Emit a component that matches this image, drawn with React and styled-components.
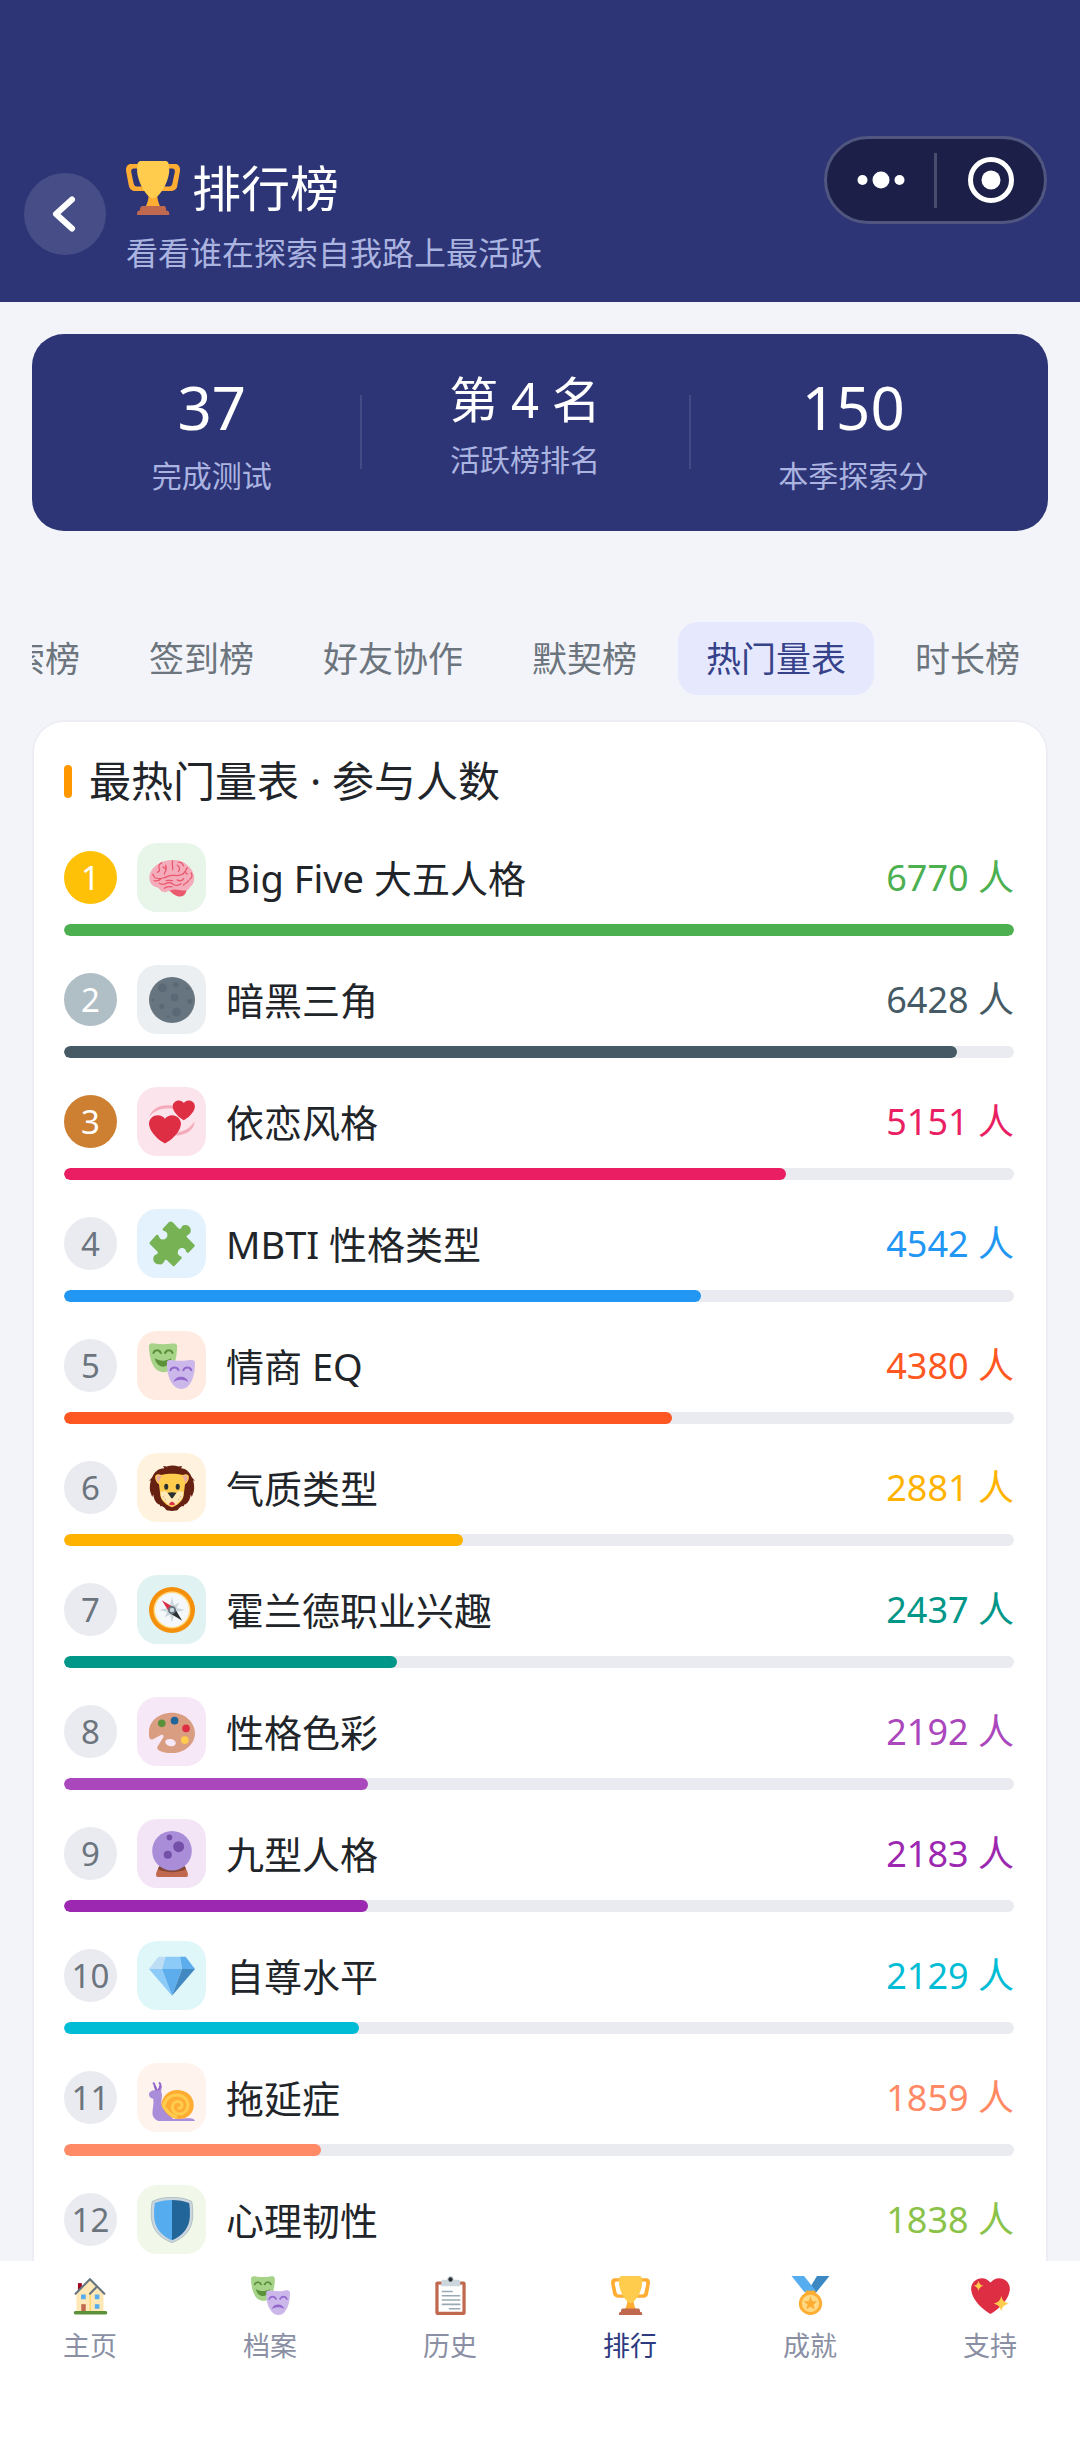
import React, { useState } from "react"
import styled, { createGlobalStyle } from "styled-components"

const GlobalStyle = createGlobalStyle`
  * {
    box-sizing: border-box;
  }

  body {
    margin: 0;
    background: #f3f4f9;
    color: #212529;
    font-family: "Noto Sans", "Noto Sans CJK SC", sans-serif;
  }

  button {
    border: 0;
    padding: 0;
    font-family: inherit;
    cursor: pointer;
  }

  h1, h2, p, ol {
    margin: 0;
    padding: 0;
    font-weight: 400;
  }
`

const heartPath =
  "M35.885 11.833c0-5.45-4.418-9.868-9.867-9.868-3.308 0-6.227 1.633-8.018 4.129-1.791-2.496-4.71-4.129-8.017-4.129-5.45 0-9.868 4.417-9.868 9.868 0 .772.098 1.52.266 2.241C1.751 22.587 11.216 31.568 18 35c6.783-3.432 16.249-12.413 17.617-20.925.17-.721.268-1.469.268-2.242z"

const emojis = {
  trophy: (
    <>
      <path
        fill="#FFAC33"
        d="M5.123 5h6C12.227 5 13 4.896 13 6V4c0-1.104-.773-2-1.877-2h-8c-2 0-3.583 2.125-3 5 0 0 1.791 9.375 1.917 9.958C2.373 18.5 4.164 20 6.081 20h6.958c1.105 0-.039-1.896-.039-3v-2c0 1.104-.773 2-1.877 2h-4c-1.104 0-1.833-1.042-2-2S3.539 7.667 3.539 7.667C3.206 5.75 4.018 5 5.123 5zm25.812 0h-6C23.831 5 22 4.896 22 6V4c0-1.104 1.831-2 2.935-2h8c2 0 3.584 2.125 3 5 0 0-1.633 9.419-1.771 10-.354 1.5-2.042 3-4 3h-7.146C21.914 20 22 18.104 22 17v-2c0 1.104 1.831 2 2.935 2h4c1.104 0 1.834-1.042 2-2s1.584-7.333 1.584-7.333C32.851 5.75 32.04 5 30.935 5zM20.832 22c0-6.958-2.709 0-2.709 0s-3-6.958-3 0-3.291 10-3.291 10h12.292s-3.292-3.042-3.292-10z"
      />
      <path
        fill="#FFCC4D"
        d="M28.8 6.577c0 6.775-6.4 18.423-10.7 18.423S7.4 13.352 7.4 6.577C7.4 1.054 8.1 0 10.1 0h16c2 0 2.7 1.054 2.7 6.577z"
      />
      <path
        fill="#C1694F"
        d="M26.8 33c0-1.4-.2-3-1.6-3H11c-1.4 0-1.8 1.6-1.8 3-1 0-1.8.7-1.8 1.6V36h21.4v-1.4c0-.9-.9-1.6-2-1.6z"
      />
    </>
  ),
  brain: (
    <>
      <path fill="#EA596E" d="M15 27c3-1.5 9-1.5 14.5 0-.3 2.600-2 5.500-5 5.500-4 0-6-2.500-9.500-5.500z" />
      <path
        fill="#F4ABBA"
        d="M35.300 17.500c-.1-3.500-1.800-6.500-4.500-8.700C28 5.500 23.500 4 18 4c-3.500 0-6.500.8-8.800 2.200C5 7.500.5 12 .3 17.500c-.1 4 2 6.800 4.700 7.500 1.500.4 2.600.5 3.500 2 1.300 2 3.500 2.400 5.500 1.800 2.500-.6 4-1.800 6-1.800 3 0 5 1 8.500.8 2-.1 2.700-1.300 3.800-3 2-1 3.200-4 3-7.300z"
      />
      <path
        fill="none"
        stroke="#EA596E"
        strokeWidth="1"
        strokeLinecap="round"
        d="M3 15c1 4 4 4 8 3s4-2.500 9-2c4 .4 7-.5 8-3M4 20c2 .5 4 0 5-1M10 6c-2 1-2.500 3-2 4.500s0 2.500-1.500 3M13 8c1.500 2.500 0 4-1 7M18.500 4.500c-1 3 .5 4.500 0 7M22 8c2 1 2.500 3 1 5M23 5.500c2 0 3.500 1 4 3M30 10c-2 2-2 4 0 5M33 14c1 2 .5 4-1 5M31 20c-1 2-3 2-4 3.500M8 22c2 2 4 1 6 0s4 0 5 1 4 1 6-.5M12 26c2-2 4-1.500 6-1M11 9.500l2 1M22 19.500c2 1 4 1 5-1M13.500 20c2-.5 3 0 5 0"
      />
    </>
  ),
  moon: (
    <>
      <circle cx="18" cy="18" r="18" fill="#66757F" />
      <g fill="#5B6876">
        <circle cx="10.5" cy="8.500" r="3.500" />
        <circle cx="20" cy="16" r="3" />
        <circle cx="21.500" cy="27.500" r="3.500" />
        <circle cx="21" cy="6" r="2" />
        <circle cx="32" cy="19" r="2" />
        <circle cx="30" cy="9" r="1" />
        <circle cx="10" cy="23" r="2" />
        <circle cx="15" cy="31" r="1" />
        <circle cx="3" cy="18" r="1" />
      </g>
    </>
  ),
  hearts: (
    <>
      <path fill="#F4ABBA" d="M.3 14C2 7.500 9 3.500 19 5.200v2.500C11 6.800 4.500 8.500.3 14zM35.700 17.500C35.500 24 29 29.500 18 28.500l2-2.500c6 .3 12-2.500 15.700-8.500z" />
      <path fill="#DD2E44" transform="translate(-.1 11.400) scale(.7 .67)" d={heartPath} />
      <path fill="#DD2E44" transform="translate(18.500 .3) scale(.485 .465)" d={heartPath} />
    </>
  ),
  puzzle: (
    <path
      fill="#77B255"
      d="M15.500 1q1.500-1.300 3 0l4.700 4.800c.8.7 1.700.4 2.200-.7C26 3.500 27.500 3 29 3.200c2.300.3 4 2.300 3.700 4.600-.2 1.500-1 2.600-2.300 3.100-1.200.5-1.300 1.300-.5 2.100l5.500 5.300q.8.900 0 1.800L31.300 24.500c-.7.7-1.800.5-2.200-.6-.5-1.600-1.400-2.600-2.900-2.700-2.200-.1-3.800 1.600-3.700 3.700.1 1.300.8 2.200 2 2.700 1.300.4 1.400 1.400.6 2.200l-5 5.200q-.8.900-1.700 0l-4.300-4.200c-.8-.8-1.700-.5-2.100.7-.7 1.800-2 2.700-3.900 2.400-3-.1-4.900-1.900-4.700-4.600 0-1.600 1-2.800 2.500-3.300 1.200-.4 1.400-1.200.6-2.100L.8 18.200q-.8-.8 0-1.700l4.700-5.300c.7-.8 1.700-.6 2.200.7.5 1.500 1.500 2.600 3 2.600 2.400 0 3.900-1.700 3.700-3.900-.2-1.400-1-2.400-2.500-2.800-1.300-.4-1.600-1.300-.8-2.200z"
    />
  ),
  masks: (
    <>
      <path fill="#A6D388" d="M0 2C1-.2 3 .2 5.500.600c3.500.5 7.500.5 11 0C19 .2 21.500 0 22 2c0 8-1.500 16-6 19.600-3 2-7 1.700-10-.6C1.500 17 0 9 0 2z" />
      <path fill="none" stroke="#5C913B" strokeWidth="1.600" strokeLinecap="round" d="M3.500 7.800c1.200-2.800 4.500-2.800 5.800 0M12.600 7.800c1.300-2.800 4.600-2.800 5.800 0" />
      <path fill="#5C913B" d="M4.500 12c4 2.600 9 2.600 13 0-.8 4-3.500 6.500-6.500 6.500S5.300 16 4.500 12z" />
      <path fill="#CBB7EA" d="M14 15c.5-2 3-1.800 5.500-1.400 3.500.5 7.500.5 11-.1 2.500-.5 5-.5 5.500 1.500 0 8-1.500 14.500-5.500 18.900-3 2.700-7.500 2.700-10.500 0C15.500 29.500 14 23 14 15z" />
      <path fill="none" stroke="#9266CC" strokeWidth="1.600" strokeLinecap="round" d="M16.800 21.200c1.200-2.800 5-2.800 6.300 0M26.900 21.200c1.300-2.800 5-2.800 6.200 0" />
      <path fill="#9266CC" d="M19.300 30.500c1.500-5.500 9.900-5.500 11.400 0-3.500-2.300-7.900-2.300-11.400 0z" />
    </>
  ),
  lion: (
    <>
      <path
        fill="#662113"
        d="M11 .8l3 .4c3-1 6-1 9 0l3-.4-1 1.700c4 0 7 3.300 8.500 7l2.500 3-1.500-.5c.8 3 1.200 6 .5 9l-1.500 4-.8-2c-.7 4-2 7-5 8l-.7 1.500-1-.5c-2 1-3 2-3.700 3.500L18 36l-4.300-.5c-.7-1.500-1.700-2.500-3.700-3.500l-1 .5L8.300 31c-3-1-4.300-4-5-8l-.8 2L1 21c-.7-3-.3-6 .5-9l-1.500.5 2.500-3C4 5.800 7 2.500 12 2.500z"
      />
      <path fill="#FFCC4D" d="M4.800 9.500C5 7.300 7 6.800 9.500 7.800c5-1.400 12-1.400 17 0 2.500-1 4.500-.5 4.700 1.700.1 2.200-1.200 4.500-3 5.500l-1.200 9.500c-1 4-5 7.500-9 8.500-4-1-8-4.500-9-8.500L7.800 15c-1.800-1-3.100-3.300-3-5.500z" />
      <path fill="#E6AAAA" d="M6 9.500c.2-1.700 1.700-1.600 4-.7-1.500 1.500-2 3.700-2.200 5C6.700 13 5.900 11.200 6 9.500zM30 9.500c-.2-1.700-1.700-1.600-4-.7 1.500 1.500 2 3.700 2.200 5 1.100-.8 1.900-2.600 1.800-4.300z" />
      <path fill="#FFE8B6" d="M9.300 21c2-.6 4-.6 5.200.7l3.500 4 3.500-4c1.200-1.300 3.200-1.300 5.200-.7 1 3.500-1.200 7-4.200 8.300-1.300 3-7.700 3-9 0-3-1.300-5.200-4.800-4.200-8.300z" />
      <path fill="#DD2E44" d="M15.700 31c0-1 1.300-2.200 2.300-2.200s2.300 1.200 2.300 2.200c-1.300.6-3.300.6-4.600 0z" />
      <path fill="#292F33" d="M14.500 21.800c2-.7 5-.7 7 0L18.500 26h-1z" />
      <ellipse cx="13.500" cy="17" rx="1.600" ry="2.400" fill="#292F33" />
      <ellipse cx="22.500" cy="17" rx="1.600" ry="2.400" fill="#292F33" />
      <g fill="#D99E82">
        <circle cx="11.200" cy="25" r=".5" />
        <circle cx="12.800" cy="27" r=".5" />
        <circle cx="24.800" cy="25" r=".5" />
        <circle cx="23.200" cy="27" r=".5" />
      </g>
    </>
  ),
  compass: (
    <>
      <circle cx="18" cy="18" r="18" fill="#F4900C" />
      <circle cx="18" cy="18" r="14.500" fill="#FFD983" />
      <circle cx="18" cy="18" r="13.300" fill="#F5F8FA" />
      <path fill="#CCD6DD" d="M18 8l1.600 6.200 4.100-2-2 4.200L28 18l-6.300 1.600 2 4.100-4.100-2L18 28l-1.600-6.300-4.100 2 2-4.100L8 18l6.300-1.600-2-4.200 4.100 2z" />
      <path fill="#DD2E44" d="M10 10.400l9.500 5.600-3.700 3.500z" />
      <path fill="#292F33" d="M26 26.400l-9.600-5.900 3.800-3.700z" />
      <circle cx="18" cy="18" r="2.400" fill="#CCD6DD" stroke="#66757F" strokeWidth="1.300" />
    </>
  ),
  palette: (
    <>
      <path
        fill="#D99E82"
        fillRule="evenodd"
        d="M18 3C8 3 0 9.500 0 18v2.500c.2 3.200 1.300 4 3.500 3l5.500-3c1.800-1 3 .3 2 2l-4.200 6.700c-1 1.800.2 3 2.200 3.800 2.500 1 5.500 1.500 9 1.500 10 0 18-7 18-15.500S28 3 18 3zm-1 20.500c2.500.3 4.300 1.900 3.900 3.600-.4 1.600-2.500 2.400-4.700 1.900s-3.800-2.100-3.400-3.700c.3-1.300 2-2 4.200-1.800z"
      />
      <circle cx="10" cy="11.200" r="3" fill="#5C913B" />
      <circle cx="20" cy="9.100" r="3" fill="#269" />
      <circle cx="29" cy="15.200" r="3" fill="#DD2E44" />
      <circle cx="28" cy="24.300" r="3" fill="#FFCC4D" />
    </>
  ),
  crystal: (
    <>
      <path fill="#C1694F" d="M8 27.500h20c1 2.500 2.500 4 2.500 7 0 1-.5 1.500-1.500 1.500H7c-1 0-1.500-.5-1.500-1.500 0-3 1.500-4.500 2.500-7z" />
      <path fill="#854836" d="M8 27.500h20l1 2.300c-6 3.300-16 3.300-22 0z" />
      <circle cx="18" cy="15.500" r="15.500" fill="#AA8DD8" />
      <g fill="#7450A8">
        <circle cx="16" cy="5" r="2.200" />
        <circle cx="23.200" cy="12.300" r="4.300" />
        <circle cx="14.700" cy="18.600" r="3.200" />
      </g>
    </>
  ),
  diamond: (
    <>
      <path fill="#BDDDF4" d="M7.300 3H13l-2.800 9.500H0z" />
      <path fill="#8CCAF7" d="M13 3h11.300l1.500 9.500H10.200z" />
      <path fill="#5DADEC" d="M24.300 3h4.400L36 12.500H25.800z" />
      <path fill="#8CCAF7" d="M0 12.500h10.200L18 33.400z" />
      <path fill="#5DADEC" d="M10.200 12.500h15.600L18 33.400z" />
      <path fill="#4289C1" d="M36 12.500H25.800L18 33.400z" />
    </>
  ),
  snail: (
    <>
      <path
        fill="#AA8DD8"
        d="M4.800 12L3.500 8.500h2L7 12h1l.5-3.500h1.700L9.500 13c.8 2 .7 4 .4 6-.5 3.500 0 5.500 2.600 8.500l6.500 7 10-.7c2 0 6.500-.3 7 2.200H9c-4 0-6.300-3-6.300-6.500 0-3.500 1.300-7 .6-11C1.200 18.300 0 17 0 15.300 0 13.500 2 12 4.800 12z"
      />
      <path fill="none" stroke="#9266CC" strokeWidth="1.600" strokeLinecap="round" d="M3.600 6.400c1 .3.600 3 2.200 5M8.300 6.400c1 .5.700 3-.6 5" />
      <path fill="#FFAC33" d="M22 11.700c7.500 0 13 5 13 12 0 6-4.300 10.300-11 10.800-6 .4-11.500-4-14.300-11C10 16.500 15.500 11.700 22 11.700z" />
      <path
        fill="none"
        stroke="#FFCC4D"
        strokeWidth="2.400"
        strokeLinecap="round"
        d="M11.500 24.500c.5-5 5.200-9 10.500-8.800 5 .2 8.500 3.500 8.500 8 0 4-3 6.800-6.500 6.800s-5.700-2.500-5.700-5.300c0-2.700 2-4.400 4.200-4.400 2 0 3.500 1.300 3.300 3.200-.1 1.500-1.200 2.200-2.400 2M12.500 26c2.300 3 5.500 6 8.500 6.500"
      />
    </>
  ),
  shield: (
    <>
      <path fill="#CCD6DD" stroke="#99AAB5" strokeWidth=".5" d="M33.500 3.500C29 1.200 24 .3 18 .3S7 1.200 2.500 3.500c-.7 4-.9 8-.7 12C2.300 25.500 8 32 18 35.700c10-3.700 15.700-10.200 16.200-20.200.2-4 0-8-.7-12z" />
      <path fill="#55ACEE" d="M18 2.300C13 2.300 8.500 3 4.500 4.700c-.5 3.500-.7 7-.5 10.500.5 9 5.500 15 14 18.600z" />
      <path fill="#269" d="M18 2.300c5 0 9.500.7 13.500 2.400.5 3.500.7 7 .5 10.500-.5 9-5.500 15-14 18.600z" />
    </>
  ),
  house: (
    <>
      <path fill="#A0041E" d="M6.400 6.600H10v8H6.400z" />
      <path fill="#FFE8B6" d="M5 16L17.500 3.500 24 10l6 6v17H5z" />
      <path fill="#FFCC4D" d="M17.300 16h.9v17h-.9z" />
      <path fill="none" stroke="#66757F" strokeWidth="1.900" strokeLinecap="round" d="M4.200 16.300L17.500 3l13.300 13.300M17.500 16.300l6.300-6.300" />
      <path fill="#55ACEE" d="M9.300 17h4.300v4.400H9.300zM22 17h4.200v4.400H22zM22 26h4.200v4.300H22z" />
      <path fill="#C1694F" d="M9.500 26h4.100v6.800H9.500z" />
      <rect x="2.500" y="32.400" width="31" height="3.200" rx="1.600" fill="#5C913B" />
    </>
  ),
  clipboard: (
    <>
      <rect x="4" y="5" width="28" height="31" rx="2" fill="#C1694F" />
      <path fill="#FFF" d="M7 8h22v25H7z" />
      <path fill="#CCD6DD" d="M11 3.500h3.700c.3-2 1.500-3.500 3.300-3.500s3 1.500 3.300 3.500H25c1.500 0 2 1 2 2.500v3.500H9.500V6c0-1.500.3-2.500 1.500-2.500z" />
      <circle cx="18" cy="3.200" r="2" fill="#292F33" />
      <path stroke="#9AAAB4" strokeWidth="1.500" strokeLinecap="round" d="M10.500 14.300h9M10.500 18.200h16M10.500 22.200h16M10.500 26.200h16M17 30.200h9.500" />
    </>
  ),
  medal: (
    <>
      <path fill="#3B88C3" d="M24 0h11.500L23 15.500h-8.500z" />
      <path fill="#55ACEE" d="M.5 0H12l10 12.500V15h-9.500z" />
      <path fill="#FFAC33" d="M13.500 13.500h9v3h-9z" />
      <circle cx="18" cy="25.300" r="10.700" fill="#FFAC33" />
      <circle cx="18" cy="25.300" r="8" fill="#FFD983" />
      <path fill="#FFAC33" d="M18 18.800l1.700 4.400 4.700.2-3.700 2.900 1.300 4.600-4-2.600-4 2.600 1.300-4.600-3.700-2.900 4.700-.2z" />
    </>
  ),
  heart: (
    <>
      <path fill="#DD2E44" d={heartPath} />
      <path fill="#FFCC4D" d="M7 4.300c.7 3 1.600 4 4.600 4.800-3 .8-3.900 1.700-4.600 4.800-.8-3.100-1.700-4-4.700-4.800 3-.8 3.900-1.800 4.700-4.800zM28 18.500c1 4.300 2.500 5.800 7 7-4.500 1.200-6 2.700-7 7-1.100-4.300-2.500-5.800-7-7 4.500-1.200 5.900-2.700 7-7z" />
    </>
  ),
}

const stats = [
  { value: "37", label: "完成测试", big: true },
  { value: "第 4 名", label: "活跃榜排名" },
  { value: "150", label: "本季探索分", big: true },
]

const tabs = ["探索榜", "签到榜", "好友协作", "默契榜", "热门量表", "时长榜"]

const scales = [
  { icon: "brain", name: "Big Five 大五人格", count: 6770, color: "#4caf50", tint: "#e8f5e9" },
  { icon: "moon", name: "暗黑三角", count: 6428, color: "#455a64", tint: "#eceff1" },
  { icon: "hearts", name: "依恋风格", count: 5151, color: "#e91e63", tint: "#fce4ec" },
  { icon: "puzzle", name: "MBTI 性格类型", count: 4542, color: "#2196f3", tint: "#e3f2fd" },
  { icon: "masks", name: "情商 EQ", count: 4380, color: "#ff5722", tint: "#ffebe1" },
  { icon: "lion", name: "气质类型", count: 2881, color: "#ffb300", tint: "#fff3e0" },
  { icon: "compass", name: "霍兰德职业兴趣", count: 2437, color: "#009688", tint: "#e0f2f1" },
  { icon: "palette", name: "性格色彩", count: 2192, color: "#ab47bc", tint: "#f7e8f8" },
  { icon: "crystal", name: "九型人格", count: 2183, color: "#9c27b0", tint: "#f3e5f5" },
  { icon: "diamond", name: "自尊水平", count: 2129, color: "#00bcd4", tint: "#e0f7fa" },
  { icon: "snail", name: "拖延症", count: 1859, color: "#ff8a65", tint: "#fff3ed" },
  { icon: "shield", name: "心理韧性", count: 1838, color: "#8bc34a", tint: "#f1f8e9" },
]

const navItems = [
  { icon: "house", label: "主页" },
  { icon: "masks", label: "档案" },
  { icon: "clipboard", label: "历史" },
  { icon: "trophy", label: "排行" },
  { icon: "medal", label: "成就" },
  { icon: "heart", label: "支持" },
]

const medalColors = ["#ffc107", "#b0bec5", "#cd7f32"]

const Emoji = ({ name, size }) => (
  <svg width={size} height={size} viewBox="0 0 36 36" aria-hidden="true">
    {emojis[name]}
  </svg>
)

const Page = styled.div`
  display: flex;
  flex-direction: column;
  height: 100vh;
`

const Header = styled.header`
  position: relative;
  display: flex;
  align-items: center;
  gap: 20px;
  flex-shrink: 0;
  padding: 152px 24px 26px;
  background: #2d3576;
`

const BackButton = styled.button`
  display: flex;
  align-items: center;
  justify-content: center;
  width: 82px;
  height: 82px;
  border-radius: 50%;
  background: #464d87;
`

const Title = styled.h1`
  display: flex;
  align-items: center;
  gap: 12px;
  color: #fff;
  font-size: 49px;
  line-height: 72px;
`

const Subtitle = styled.p`
  margin-top: 6px;
  color: #abb4e0;
  font-size: 32px;
  line-height: 46px;
`

/* host app controls, they float over every page */
const Capsule = styled.div`
  position: absolute;
  top: 136px;
  right: 33px;
  display: flex;
  align-items: center;
  width: 223px;
  height: 88px;
  border: 3px solid #50567f;
  border-radius: 44px;
  background: #1c2048;
`

const CapsuleButton = styled.button`
  display: flex;
  flex: 1;
  align-items: center;
  justify-content: center;
  height: 100%;
  background: none;
`

const CapsuleDivider = styled.span`
  width: 3px;
  height: 55px;
  background: #494d6d;
`

const Content = styled.main`
  flex: 1;
  min-height: 0;
  padding: 32px 32px 0;
  overflow-y: auto;
  scrollbar-width: none;
`

const StatsCard = styled.section`
  display: flex;
  align-items: flex-start;
  padding: 35px 32px 36px;
  border-radius: 32px;
  background: #2d3576;
`

const Stat = styled.div`
  flex: 1 1 auto;
  text-align: center;
`

const StatValue = styled.div`
  color: #fff;
  font-size: ${(props) => (props.$big ? 60 : 49)}px;
  line-height: ${(props) => (props.$big ? 76 : 60)}px;
`

const StatLabel = styled.div`
  margin-top: 12px;
  color: #abb4e0;
  font-size: 30px;
  line-height: 38px;
`

const StatDivider = styled.span`
  align-self: center;
  width: 2px;
  height: 74px;
  background: #434a85;
`

const TabBar = styled.nav`
  display: flex;
  justify-content: flex-end;
  gap: 13px;
  margin: 91px 0 25px;
  overflow: hidden;
`

const Tab = styled.button`
  flex-shrink: 0;
  padding: 0 28px;
  border-radius: 20px;
  background: ${(props) => (props.$active ? "#e6e9fe" : "transparent")};
  color: ${(props) => (props.$active ? "#36428a" : "#6c757d")};
  font-size: 35px;
  line-height: 73px;
`

const Card = styled.section`
  padding: 32px 34px 32px 32px;
  border-radius: 32px;
  background: #fff;
  box-shadow: inset 0 0 0 2px #edeef3;
`

const CardTitle = styled.h2`
  display: flex;
  align-items: center;
  gap: 17px;
  font-size: 42px;
  line-height: 58px;

  &::before {
    width: 8px;
    height: 33px;
    border-radius: 4px;
    background: #ff9800;
    content: "";
  }
`

const List = styled.ol`
  display: flex;
  flex-direction: column;
  gap: 29px;
  margin-top: 33px;
  list-style: none;
`

const RowHead = styled.div`
  display: flex;
  align-items: center;
`

const Rank = styled.span`
  width: 53px;
  height: 53px;
  border-radius: 50%;
  background: ${(props) => props.$medal || "#eaebf1"};
  color: ${(props) => (props.$medal ? "#fff" : "#6c757d")};
  font-size: 33px;
  line-height: 53px;
  text-align: center;
`

const Tile = styled.span`
  display: flex;
  align-items: center;
  justify-content: center;
  width: 69px;
  height: 69px;
  margin: 0 20px;
  border-radius: 20px;
  background: ${(props) => props.$tint};
`

const Name = styled.span`
  flex: 1;
  font-size: 38px;
  line-height: 56px;
`

const Count = styled.span`
  color: ${(props) => props.$color};
  font-size: 36px;
  line-height: 56px;
`

const Track = styled.div`
  height: 12px;
  margin-top: 12px;
  border-radius: 6px;
  background: #eaebf1;
  overflow: hidden;
`

const Fill = styled.div`
  height: 100%;
  border-radius: 6px;
  background: ${(props) => props.$color};
`

const BottomNav = styled.nav`
  display: flex;
  flex-shrink: 0;
  padding: 15px 0 94px;
  background: #fff;
`

const NavLink = styled.a`
  display: flex;
  flex: 1;
  flex-direction: column;
  align-items: center;
  gap: 11px;
  color: ${(props) => (props.$active ? "#2d3a80" : "#8a8fa3")};
  font-size: 27px;
  line-height: 40px;
  text-decoration: none;
`

const App = () => {
  const [activeTab, setActiveTab] = useState("热门量表")
  const max = scales[0].count

  return (
    <Page>
      <GlobalStyle />

      <Header>
        <BackButton aria-label="返回">
          <svg width="40" height="40" viewBox="0 0 40 40">
            <path
              d="M27 5.500L11 20l16 14.500"
              fill="none"
              stroke="#fff"
              strokeWidth="6"
              strokeLinecap="round"
              strokeLinejoin="round"
            />
          </svg>
        </BackButton>
        <div>
          <Title>
            <Emoji name="trophy" size={54} />
            排行榜
          </Title>
          <Subtitle>看看谁在探索自我路上最活跃</Subtitle>
        </div>
        <Capsule>
          <CapsuleButton aria-label="更多">
            <svg width="48" height="18" viewBox="0 0 48 18" fill="#fff">
              <circle cx="5.500" cy="9" r="5" />
              <circle cx="24" cy="9" r="8.500" />
              <circle cx="42.500" cy="9" r="5" />
            </svg>
          </CapsuleButton>
          <CapsuleDivider />
          <CapsuleButton aria-label="关闭">
            <svg width="48" height="48" viewBox="0 0 48 48">
              <circle cx="24" cy="24" r="20.500" fill="none" stroke="#fff" strokeWidth="5" />
              <circle cx="24" cy="24" r="9.500" fill="#fff" />
            </svg>
          </CapsuleButton>
        </Capsule>
      </Header>

      <Content>
        <StatsCard>
          {stats.map((stat, index) => (
            <React.Fragment key={stat.label}>
              {index > 0 && <StatDivider />}
              <Stat>
                <StatValue $big={stat.big}>{stat.value}</StatValue>
                <StatLabel>{stat.label}</StatLabel>
              </Stat>
            </React.Fragment>
          ))}
        </StatsCard>

        <TabBar>
          {tabs.map((tab) => (
            <Tab key={tab} $active={tab === activeTab} onClick={() => setActiveTab(tab)}>
              {tab}
            </Tab>
          ))}
        </TabBar>

        <Card>
          <CardTitle>最热门量表 · 参与人数</CardTitle>
          <List>
            {scales.map((scale, index) => (
              <li key={scale.name}>
                <RowHead>
                  <Rank $medal={medalColors[index]}>{index + 1}</Rank>
                  <Tile $tint={scale.tint}>
                    <Emoji name={scale.icon} size={46} />
                  </Tile>
                  <Name>{scale.name}</Name>
                  <Count $color={scale.color}>{scale.count} 人</Count>
                </RowHead>
                <Track>
                  <Fill
                    $color={scale.color}
                    style={{ width: `${Math.floor((scale.count / max) * 100)}%` }}
                  />
                </Track>
              </li>
            ))}
          </List>
        </Card>
      </Content>

      <BottomNav>
        {navItems.map((item) => (
          <NavLink key={item.label} href="#" $active={item.label === "排行"}>
            <Emoji name={item.icon} size={39} />
            {item.label}
          </NavLink>
        ))}
      </BottomNav>
    </Page>
  )
}

export default App
